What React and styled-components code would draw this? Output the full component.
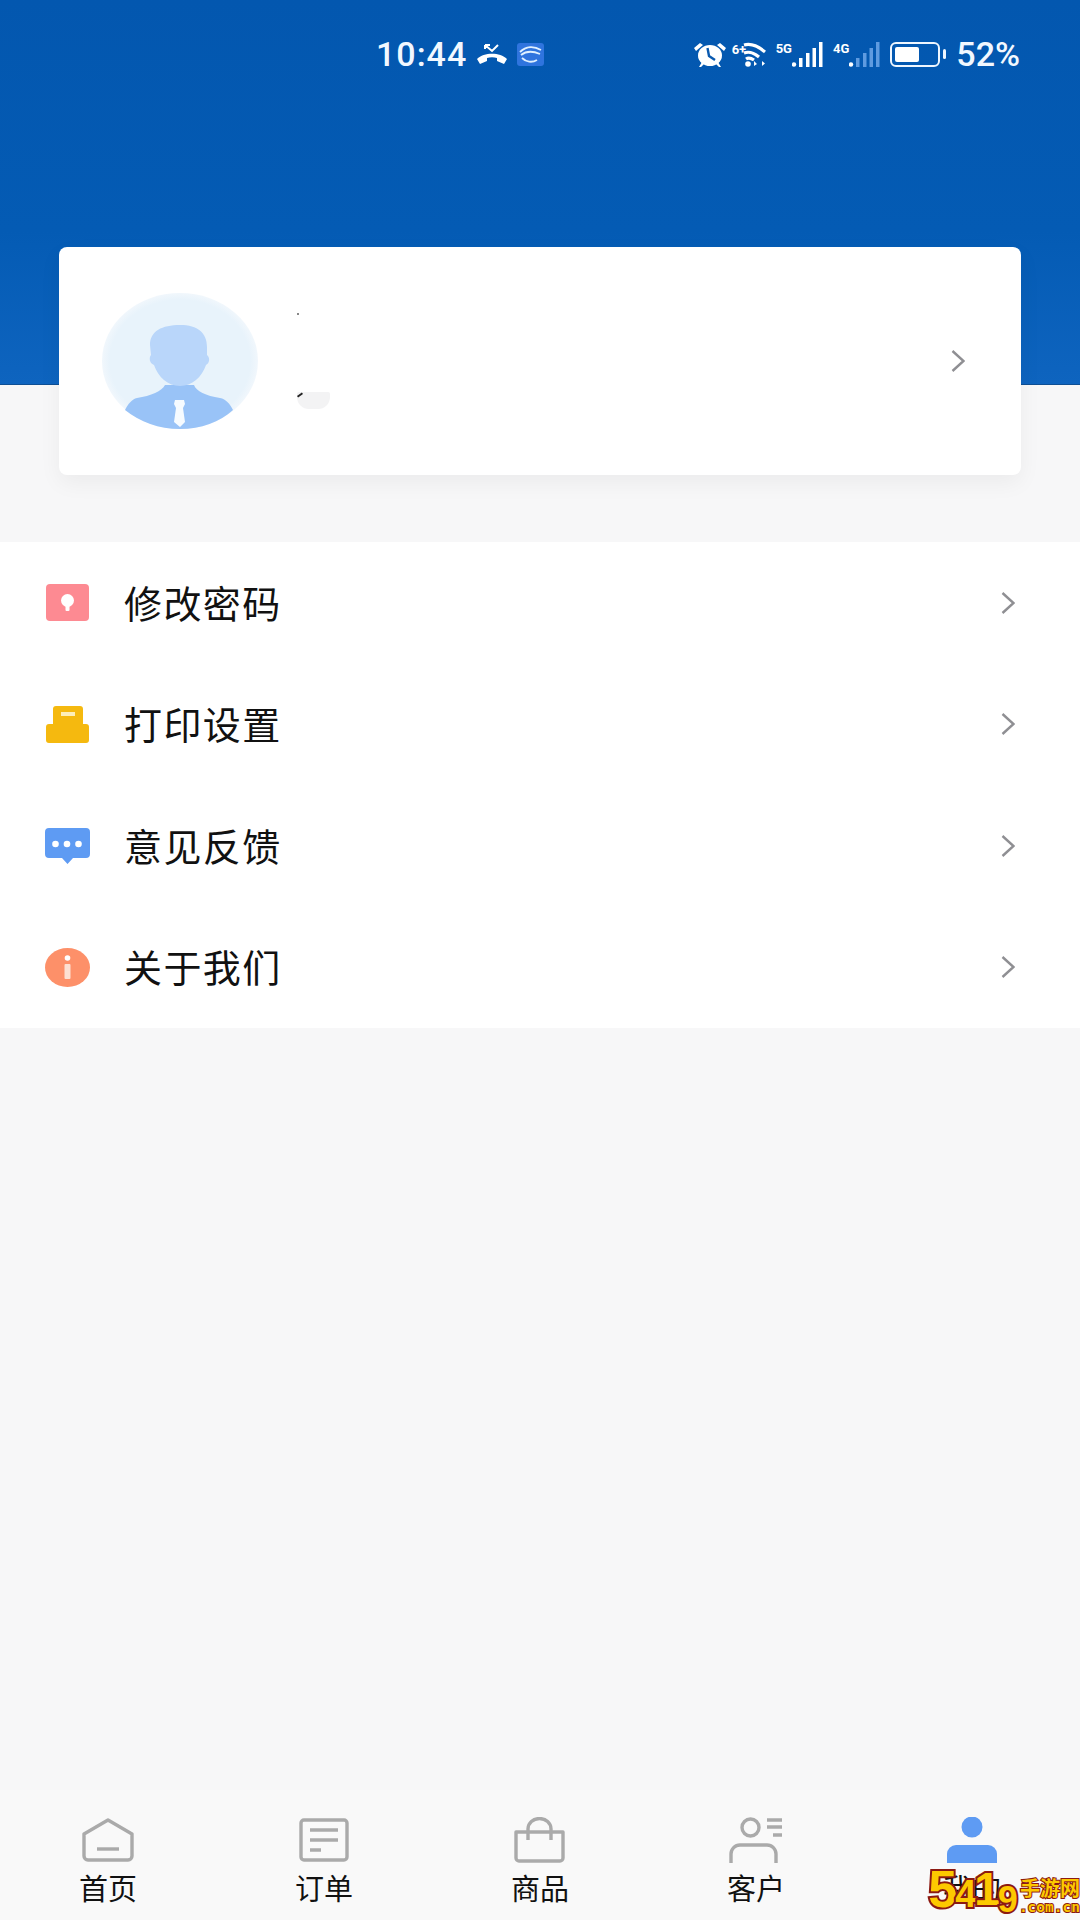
import styled, { createGlobalStyle } from "styled-components";

const GlobalStyle = createGlobalStyle`
  html, body {
    margin: 0;
    padding: 0;
    background: #f7f7f8;
  }
  * {
    box-sizing: border-box;
  }
`;

const menuItems = [
  { label: "修改密码", Icon: KeyIcon },
  { label: "打印设置", Icon: PrinterIcon },
  { label: "意见反馈", Icon: ChatIcon },
  { label: "关于我们", Icon: InfoIcon },
];

const tabs = [
  { label: "首页", Icon: HomeIcon },
  { label: "订单", Icon: OrderIcon },
  { label: "商品", Icon: BagIcon },
  { label: "客户", Icon: CustomerIcon },
  { label: "我的", Icon: MeIcon },
];

const watermarkDigits = [
  { char: "5", size: 52, lift: 4 },
  { char: "4", size: 38, lift: 5 },
  { char: "1", size: 46, lift: 6 },
  { char: "9", size: 36, lift: 0 },
];

function KeyIcon() {
  return (
    <svg width="43" height="37" viewBox="0 0 43 37">
      <rect width="43" height="37" rx="4" fill="#fd8a92" />
      <circle cx="21.5" cy="16.5" r="6.5" fill="#fff" />
      <rect x="19.5" y="18" width="4" height="9" rx="1" fill="#fff" />
    </svg>
  );
}

function PrinterIcon() {
  return (
    <svg width="43" height="37" viewBox="0 0 43 37">
      <path d="M7 3a3 3 0 0 1 3-3h24a3 3 0 0 1 3 3v15h3a3 3 0 0 1 3 3v13a3 3 0 0 1-3 3H3a3 3 0 0 1-3-3V21a3 3 0 0 1 3-3h4z" fill="#f5b90f" />
      <rect x="15" y="6" width="14" height="4" fill="#fdeeb9" />
    </svg>
  );
}

function ChatIcon() {
  return (
    <svg width="45" height="36" viewBox="0 0 45 36">
      <path d="M4 0h37a4 4 0 0 1 4 4v22a4 4 0 0 1-4 4H28l-5.5 6-5.5-6H4a4 4 0 0 1-4-4V4a4 4 0 0 1 4-4z" fill="#5e9bf3" />
      <circle cx="10.5" cy="16" r="3.3" fill="#fff" />
      <circle cx="22" cy="16" r="3.3" fill="#fff" />
      <circle cx="33.5" cy="16" r="3.3" fill="#fff" />
    </svg>
  );
}

function InfoIcon() {
  return (
    <svg width="45" height="39" viewBox="0 0 45 39">
      <ellipse cx="22.5" cy="19.5" rx="22.5" ry="19.5" fill="#fd9069" />
      <circle cx="22.5" cy="10" r="2.8" fill="#fff" />
      <rect x="19.5" y="16" width="6" height="15" rx="1" fill="#fde0d2" />
    </svg>
  );
}

function HomeIcon() {
  return (
    <svg width="52" height="46" viewBox="0 0 52 46" fill="none" stroke="#aaaaaa" strokeWidth="3.4" strokeLinejoin="round">
      <path d="M2 17 26 3l24 14v22a4 4 0 0 1-4 4H6a4 4 0 0 1-4-4z" />
      <path d="M15 32h22" />
    </svg>
  );
}

function OrderIcon() {
  return (
    <svg width="52" height="46" viewBox="0 0 52 46" fill="none" stroke="#aaaaaa" strokeWidth="3.4">
      <rect x="3" y="3" width="46" height="40" rx="3" />
      <path d="M12 13h28M12 23h28M12 33h11" />
    </svg>
  );
}

function BagIcon() {
  return (
    <svg width="52" height="46" viewBox="0 0 52 46" fill="none" stroke="#aaaaaa" strokeWidth="3.4" strokeLinejoin="round">
      <path d="M2 15h47v26a3 3 0 0 1-3 3H5a3 3 0 0 1-3-3z" />
      <path d="M14 23V12a11 10 0 0 1 23 0v11" />
    </svg>
  );
}

function CustomerIcon() {
  return (
    <svg width="54" height="46" viewBox="0 0 54 46" fill="none" stroke="#aaaaaa" strokeWidth="3.4">
      <circle cx="21.5" cy="10.5" r="8.5" />
      <path d="M2 46V37a9 9 0 0 1 9-9h27a9 9 0 0 1 9 9v9" />
      <path d="M38 3h15M38 10h15M44 18h9" />
    </svg>
  );
}

function MeIcon() {
  return (
    <svg width="52" height="46" viewBox="0 0 52 46" fill="#5e9bf3">
      <circle cx="26" cy="10" r="10.5" />
      <path d="M1 46V37a9 9 0 0 1 9-9h32a9 9 0 0 1 9 9v9z" />
    </svg>
  );
}

function Chevron() {
  return (
    <svg width="14" height="22" viewBox="0 0 14 22" fill="none" stroke="#8f8f93" strokeWidth="2.4">
      <path d="M1.5 1l11 10-11 10" />
    </svg>
  );
}

function Avatar() {
  return (
    <svg width="156" height="136" viewBox="0 0 156 136">
      <defs>
        <radialGradient id="avatarBg" cx="50%" cy="50%" r="50%">
          <stop offset="90%" stopColor="#e8f3fb" />
          <stop offset="100%" stopColor="#f1f7fc" />
        </radialGradient>
      </defs>
      <ellipse cx="78" cy="68" rx="78" ry="68" fill="url(#avatarBg)" />
      <path d="M63 92c-3 6-14 11-28 13-5 1-9 6-12 12 15 12 34 19 55 19s40-7 53-19c-3-6-7-11-13-12-14-2-24-7-26-13z" fill="#99c3f7" />
      <path d="M48 52C48 38 60 32 78 32s27 8 27 22v8c3 2 3 8-1 10-4 12-14 21-26 21S56 84 52 72c-5-2-5-8-3-10z" fill="#b9d6fa" />
      <path d="M73 107h9l1 4-2 4 2 14-5 5-6-5 2-14-2-4z" fill="#f6fbff" />
    </svg>
  );
}

function WifiIcon() {
  return (
    <svg width="34" height="25" viewBox="0 0 34 25" fill="none" stroke="#fff" strokeWidth="3.2">
      <path d="M12 3c7-2 14 1 21 7M12 11c6-2 10 0 15 4M14 17c3-2 5-1 8 1" />
      <circle cx="16" cy="22" r="2.8" fill="#fff" stroke="none" />
      <path d="M22 24v-5l3 3zM30 19v5l3-2.5z" fill="#fff" stroke="none" />
    </svg>
  );
}

function SignalIcon({ faded }) {
  const color = faded ? "#5f9be0" : "#fff";
  return (
    <svg width="31" height="25" viewBox="0 0 31 25" fill={color}>
      <circle cx="2" cy="22.5" r="2.2" fill="#fff" />
      <rect x="7" y="16" width="3.5" height="9" />
      <rect x="14" y="11" width="3.5" height="14" />
      <rect x="20.5" y="6" width="3.5" height="19" />
      <rect x="27" y="0" width="3.5" height="25" />
    </svg>
  );
}

function AlarmIcon() {
  return (
    <svg width="32" height="25" viewBox="0 0 32 25">
      <ellipse cx="16" cy="13.5" rx="12" ry="10.5" fill="#fff" />
      <path d="M0 6l6-5 3 2-7 6zM32 6l-6-5-3 2 7 6zM5 25l3-5 2 2-3 3zM27 25l-3-5-2 2 3 3z" fill="#fff" />
      <path d="M13.5 6l1.5 8 6 4" fill="none" stroke="#0a5ab0" strokeWidth="2.4" />
    </svg>
  );
}

function CallIcon() {
  return (
    <svg width="30" height="20" viewBox="0 0 30 20">
      <path d="M0 15c7-7 23-7 30 0l-3 5-7-3v-3c-3-1-7-1-10 0v3l-7 3z" fill="#fff" />
      <path d="M8 1l7 6 6-6M8 1v4M8 1h5" fill="none" stroke="#fff" strokeWidth="2" />
    </svg>
  );
}

function AppBadge() {
  return (
    <svg width="27" height="23" viewBox="0 0 27 23">
      <rect width="27" height="23" rx="3" fill="#2f74de" />
      <path d="M3 9c6-6 14-6 21-2M4 12c5-4 12-4 19-1M5 15c4 4 10 5 15 2" fill="none" stroke="#dff0ff" strokeWidth="1.8" />
    </svg>
  );
}

export default function App() {
  return (
    <>
      <GlobalStyle />
      <Page>
        <Hero>
          <StatusBar>
            <ClockGroup>
              <StatusText>10:44</StatusText>
              <CallIcon />
              <AppBadge />
            </ClockGroup>
            <NetGroup>
              <AlarmIcon />
              <WifiCluster>
                <WifiTag>6+</WifiTag>
                <WifiIcon />
              </WifiCluster>
              <NetCluster>
                <NetTag>5G</NetTag>
                <SignalIcon />
              </NetCluster>
              <NetCluster>
                <NetTag>4G</NetTag>
                <SignalIcon faded />
              </NetCluster>
              <Battery>
                <BatteryFill />
              </Battery>
              <PercentText>52%</PercentText>
            </NetGroup>
          </StatusBar>
        </Hero>

        <ProfileCard>
          <Avatar />
          <ProfileText>
            <Speck />
            <Smudge />
          </ProfileText>
          <Chevron />
        </ProfileCard>

        <Menu>
          {menuItems.map(({ label, Icon }) => (
            <MenuRow key={label}>
              <IconSlot>
                <Icon />
              </IconSlot>
              <MenuLabel>{label}</MenuLabel>
              <Chevron />
            </MenuRow>
          ))}
        </Menu>

        <TabBar>
          {tabs.map(({ label, Icon }) => (
            <Tab key={label}>
              <TabIcon>
                <Icon />
              </TabIcon>
              <TabLabel>{label}</TabLabel>
            </Tab>
          ))}
        </TabBar>

        <Watermark>
          {watermarkDigits.map(({ char, size, lift }) => (
            <WatermarkDigit key={char} $size={size} $lift={lift}>
              {char}
            </WatermarkDigit>
          ))}
          <WatermarkSide>
            <WatermarkCn>手游网</WatermarkCn>
            <WatermarkDomain>.com.cn</WatermarkDomain>
          </WatermarkSide>
        </Watermark>
      </Page>
    </>
  );
}

const Page = styled.div`
  position: relative;
  width: 1080px;
  height: 1920px;
  display: flex;
  flex-direction: column;
  overflow: hidden;
  background: #f7f7f8;
  font-family: "Noto Sans CJK SC", "Noto Sans", sans-serif;
`;

const Hero = styled.header`
  height: 385px;
  flex: none;
  padding: 34px 60px 0 376px;
  background: linear-gradient(180deg, #0357af 0%, #045bb4 60%, #0e64bf 100%);
  border-bottom: 1px solid #0e4f94;
`;

const StatusBar = styled.div`
  display: flex;
  justify-content: space-between;
  align-items: center;
  height: 40px;
  color: #fff;
`;

const ClockGroup = styled.div`
  display: flex;
  align-items: center;
  gap: 10px;
`;

const NetGroup = styled.div`
  display: flex;
  align-items: center;
  gap: 10px;
`;

const StatusText = styled.span`
  font-family: Roboto, "Noto Sans", sans-serif;
  font-size: 34px;
  font-weight: 500;
  line-height: 40px;
  letter-spacing: 1px;
  color: #f2f8ff;
`;

const PercentText = styled(StatusText)`
  letter-spacing: 0;
`;

const NetCluster = styled.span`
  display: flex;
  align-items: flex-start;
`;

const WifiCluster = styled.span`
  position: relative;
  display: flex;
  margin-left: -4px;
`;

const WifiTag = styled.span`
  position: absolute;
  left: 0;
  top: 1px;
  font-family: Roboto, sans-serif;
  font-size: 13px;
  font-weight: 700;
  line-height: 13px;
`;

const NetTag = styled.span`
  font-family: Roboto, sans-serif;
  font-size: 13px;
  font-weight: 700;
  line-height: 13px;
`;

const Battery = styled.span`
  position: relative;
  width: 50px;
  height: 25px;
  padding: 3px;
  margin-right: 6px;
  border: 2.5px solid #eef6ff;
  border-radius: 6px;

  &::after {
    content: "";
    position: absolute;
    top: 5px;
    right: -8px;
    width: 3px;
    height: 10px;
    border-radius: 2px;
    background: #eef6ff;
  }
`;

const BatteryFill = styled.span`
  display: block;
  width: 58%;
  height: 100%;
  border-radius: 2px;
  background: #fff;
`;

const ProfileCard = styled.section`
  position: relative;
  flex: none;
  display: flex;
  align-items: center;
  width: 962px;
  height: 228px;
  margin: -138px 0 0 59px;
  padding: 0 56px 0 43px;
  border-radius: 8px;
  background: #fff;
  box-shadow: 0 8px 22px rgba(0, 0, 0, 0.05);
`;

const ProfileText = styled.div`
  flex: 1;
  align-self: stretch;
  display: flex;
  flex-direction: column;
  align-items: flex-start;
  padding: 66px 0 0 39px;
`;

const Speck = styled.span`
  width: 2px;
  height: 2px;
  background: #888;
`;

const Smudge = styled.span`
  position: relative;
  width: 33px;
  height: 17px;
  margin-top: 77px;
  border-radius: 2px 2px 12px 12px;
  background: #f3f3f4;

  &::before {
    content: "";
    position: absolute;
    left: 0;
    top: 2px;
    width: 6px;
    height: 2px;
    background: #222;
    transform: rotate(-35deg);
  }
`;

const Menu = styled.nav`
  flex: none;
  margin-top: 67px;
  background: #fff;
`;

const MenuRow = styled.div`
  display: flex;
  align-items: center;
  height: 121.5px;
  padding: 0 65px 0 45px;
`;

const IconSlot = styled.span`
  display: flex;
  justify-content: center;
  width: 45px;
  margin-right: 34px;
`;

const MenuLabel = styled.span`
  flex: 1;
  padding-bottom: 2px;
  font-size: 38px;
  line-height: 50px;
  letter-spacing: 1.4px;
  color: #111;
`;

const TabBar = styled.footer`
  display: grid;
  grid-template-columns: repeat(5, 1fr);
  flex: none;
  height: 130px;
  margin-top: auto;
  padding: 27px 0 0 0;
  background: #f9f9f9;
`;

const Tab = styled.div`
  display: flex;
  flex-direction: column;
  align-items: center;
`;

const TabIcon = styled.span`
  display: flex;
  align-items: flex-end;
  height: 46px;
`;

const TabLabel = styled.span`
  margin-top: 6px;
  font-size: 29px;
  line-height: 36px;
  color: #111;
`;

const Watermark = styled.div`
  position: absolute;
  right: 0;
  bottom: 5px;
  display: flex;
  align-items: flex-end;
  white-space: nowrap;
`;

const WatermarkDigit = styled.span`
  margin-bottom: ${({ $lift }) => $lift}px;
  font-family: "Liberation Sans", sans-serif;
  font-size: ${({ $size }) => $size}px;
  font-weight: 700;
  line-height: 0.82;
  letter-spacing: -2px;
  color: #fdc900;
  -webkit-text-stroke: 4px #8c1a12;
  paint-order: stroke fill;
`;

const WatermarkSide = styled.span`
  display: flex;
  flex-direction: column;
  align-items: flex-end;
  margin-left: 3px;
`;

const WatermarkCn = styled.span`
  font-size: 20px;
  font-weight: 700;
  line-height: 22px;
  color: #fdc900;
  -webkit-text-stroke: 2px #8c1a12;
  paint-order: stroke fill;
`;

const WatermarkDomain = styled.span`
  font-family: "DejaVu Sans Mono", monospace;
  font-size: 14.5px;
  font-weight: 700;
  line-height: 16px;
  color: #fdc900;
  -webkit-text-stroke: 2px #8c1a12;
  paint-order: stroke fill;
`;
